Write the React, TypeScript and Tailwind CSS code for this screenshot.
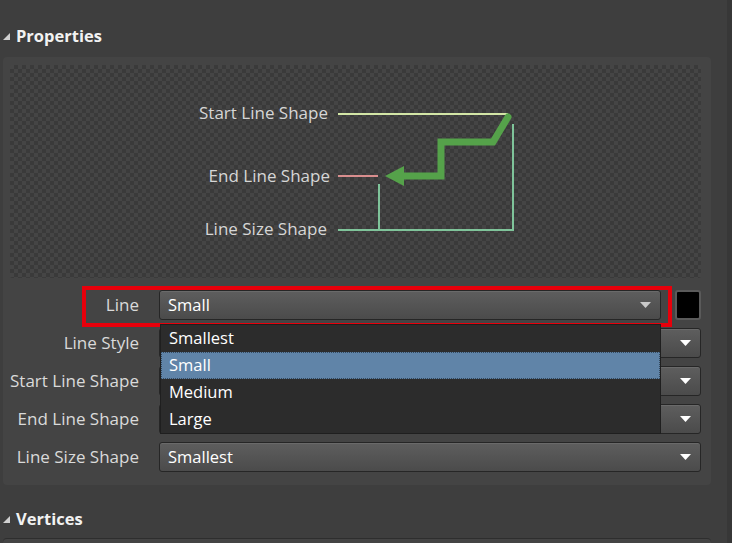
import React from "react";

const font = { fontFamily: '"Open Sans", "Noto Sans", sans-serif' };

const Caret: React.FC<{ className?: string }> = ({ className }) => (
  <svg width="11" height="7" viewBox="0 0 11 7" className={className}>
    <polygon points="0,0 11,0 5.5,6" fill="currentColor" />
  </svg>
);

const SectionHeader: React.FC<{ label: string }> = ({ label }) => (
  <div className="flex items-center gap-[6px] pl-[3px]">
    <svg width="7" height="7" viewBox="0 0 7 7">
      <polygon points="7,0 7,7 0,7" fill="#d0d0d0" />
    </svg>
    <span className="text-[16.5px] font-bold text-[#f2f2f2]">{label}</span>
  </div>
);

const Dropdown: React.FC<{ value?: string; light?: boolean }> = ({
  value,
  light,
}) => (
  <div className="flex h-[30px] flex-1 items-center justify-between rounded-[3px] border border-[#262626] bg-gradient-to-b from-[#5e5e5e] to-[#4b4b4b] pl-[8px] pr-[9px] shadow-[inset_0_1px_0_#6a6a6a]">
    <span className="text-[16.5px] text-white">{value}</span>
    <Caret className={light ? "text-[#c9c9c9]" : "text-white"} />
  </div>
);

const Row: React.FC<{ label: string; children: React.ReactNode }> = ({
  label,
  children,
}) => (
  <div className="flex h-[30px] shrink-0 items-center gap-[20px]">
    <span className="w-[129px] shrink-0 whitespace-nowrap text-right text-[17px] text-[#dadada]">
      {label}
    </span>
    {children}
  </div>
);

const Preview: React.FC = () => (
  <div className="h-[213px] rounded-[2px] bg-[repeating-conic-gradient(#3a3a3a_0_25%,#454545_0_50%)] bg-[length:8px_8px]">
    <svg width="691" height="213" viewBox="10 65 691 213" className="block">
      <g fill="#d6d6d6" fontSize="17" textAnchor="end" style={font}>
        <text x="328" y="119">Start Line Shape</text>
        <text x="330" y="182">End Line Shape</text>
        <text x="327" y="235">Line Size Shape</text>
      </g>
      <line x1="338" y1="114" x2="508" y2="114" stroke="#d3e6a6" strokeWidth="2" />
      <line x1="338" y1="176" x2="378" y2="176" stroke="#d98e8e" strokeWidth="2" />
      <line x1="338" y1="230" x2="514" y2="230" stroke="#7fc49a" strokeWidth="2" />
      <line x1="513" y1="124" x2="513" y2="231" stroke="#7fc49a" strokeWidth="2" />
      <line x1="379" y1="184" x2="379" y2="230" stroke="#7fc49a" strokeWidth="2" />
      <path
        d="M508,117 L493,142 L441,142 L441,176 L400,176"
        fill="none"
        stroke="#55a24a"
        strokeWidth="7"
        strokeLinecap="round"
      />
      <polygon points="385,176 404,166 404,186" fill="#55a24a" />
    </svg>
  </div>
);

const App: React.FC = () => {
  const options = ["Smallest", "Small", "Medium", "Large"];
  return (
    <div className="flex h-[543px] w-[732px] overflow-hidden bg-[#3e3e3e]" style={font}>
      <div className="flex w-[727px] flex-col">
        <div className="flex h-[57px] shrink-0 items-end pb-[8px]">
          <SectionHeader label="Properties" />
        </div>
        <div className="ml-[3px] w-[708px] shrink-0 rounded-[4px] bg-[#444444] pb-[13px] pl-[7px] pr-[10px] pt-[8px]">
          <Preview />
          <div className="relative mt-[12px] flex flex-col gap-[8px]">
            <div className="relative">
              <Row label="Line">
                <Dropdown value="Small" light />
                <div className="ml-[-6px] h-[30px] w-[26px] rounded-[3px] border-2 border-[#5a5a5a] bg-black" />
              </Row>
              <div className="absolute left-[72px] top-[-4px] h-[41px] w-[590px] border-4 border-[#e8000b]" />
            </div>
            <Row label="Line Style">
              <Dropdown />
            </Row>
            <Row label="Start Line Shape">
              <Dropdown />
            </Row>
            <Row label="End Line Shape">
              <Dropdown />
            </Row>
            <Row label="Line Size Shape">
              <Dropdown value="Smallest" />
            </Row>
            <div className="absolute left-[150px] top-[34px] w-[501px] border border-[#1f1f1f] bg-[#2c2c2c]">
              {options.map((o) => (
                <div
                  key={o}
                  className={
                    o === "Small"
                      ? "flex h-[27px] items-center border border-dotted border-[#34495e] bg-[#6084a8] pl-[7px] text-[16.5px] text-white"
                      : "flex h-[27px] items-center pl-[8px] text-[16.5px] text-white"
                  }
                >
                  {o}
                </div>
              ))}
            </div>
          </div>
        </div>
        <div className="flex h-[53px] shrink-0 items-center pt-[15px]">
          <SectionHeader label="Vertices" />
        </div>
        <div className="ml-[3px] h-[10px] w-[708px] shrink-0 rounded-t-[4px] border-t border-[#2e2e2e] bg-[#444444]" />
      </div>
      <div className="w-[5px] bg-[#373737]" />
    </div>
  );
};

export default App;
